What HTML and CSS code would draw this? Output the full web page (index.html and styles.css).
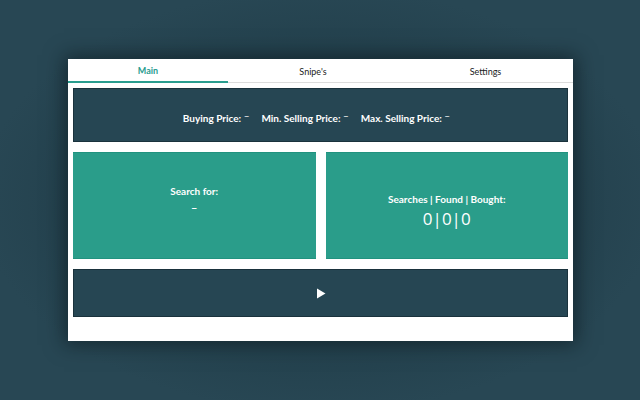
FILE: index.html
```html
<!DOCTYPE html>
<html>
<head>
<meta charset="utf-8">
<link rel="stylesheet" href="styles.css">
</head>
<body>
<div class="window">
  <div class="tabs">
    <div class="tab active">Main</div>
    <div class="tab">Snipe's</div>
    <div class="tab">Settings</div>
  </div>
  <div class="content">
    <div class="panel dark prices">
      <span class="price">Buying Price: <span class="dash">–</span></span>
      <span class="price">Min. Selling Price: <span class="dash">–</span></span>
      <span class="price">Max. Selling Price: <span class="dash">–</span></span>
    </div>
    <div class="row">
      <div class="panel teal search">
        <div class="label">Search for:</div>
        <div class="value-small">–</div>
      </div>
      <div class="panel teal stats">
        <div class="label">Searches | Found | Bought:</div>
        <div class="value">0|0|0</div>
      </div>
    </div>
    <div class="panel dark play">
      <svg width="10" height="11" viewBox="0 0 10 11"><path d="M1 0.5 L9.5 5.5 L1 10.5 Z" fill="#fff"/></svg>
    </div>
  </div>
</div>
</body>
</html>
```
FILE: styles.css
```css
html, body {
  margin: 0;
  padding: 0;
}
body {
  background: radial-gradient(ellipse at 50% 50%, #1c333d 0%, #223f4b 45%, #284754 75%);
  width: 640px;
  height: 400px;
  overflow: hidden;
  font-family: "Lato", "Open Sans", sans-serif;
  padding-top: 59px;
  box-sizing: border-box;
}
.window {
  margin-left: 68px;
  width: 505px;
  height: 282px;
  background: #fff;
  box-shadow: 0 0 18px 4px rgba(10, 20, 25, 0.55);
  display: flex;
  flex-direction: column;
}
.tabs {
  display: flex;
  height: 24px;
  border-bottom: 1px solid #dcdcdc;
  box-sizing: border-box;
}
.tab {
  flex: 1;
  display: flex;
  align-items: center;
  justify-content: center;
  font-size: 9px;
  color: #222;
  box-sizing: border-box;
  padding-top: 1px;
}
.tab.active {
  color: #2a9d8f;
  font-weight: 700;
  border-bottom: 2px solid #2a9d8f;
  margin-bottom: -1px;
  flex: 0 0 160px;
}
.tab:nth-child(2) { flex: 0 0 170px; }
.content {
  padding: 5px 5px 0 5px;
  display: flex;
  flex-direction: column;
  gap: 10px;
}
.panel {
  box-sizing: border-box;
  color: #fff;
  display: flex;
  align-items: center;
  justify-content: center;
}
.dark {
  background: #264653;
  border: 1px solid #1a323c;
}
.teal {
  background: #2a9d8a;
  border-top: 1px solid #21927f;
  border-bottom: 1px solid #21927f;
  flex-direction: column;
  flex: 1;
  height: 107px;
}
.search {
  padding-bottom: 12px;
}
.stats {
  padding-top: 12px;
}
.prices {
  height: 54px;
  gap: 12px;
  font-size: 10px;
  font-weight: 700;
  padding-top: 6px;
  padding-right: 8px;
}
.dash {
  position: relative;
  top: -3px;
  font-weight: 400;
}
.row {
  display: flex;
  gap: 10px;
}
.label {
  font-size: 10px;
  font-weight: 700;
}
.value-small {
  font-size: 11px;
  font-weight: 700;
  margin-top: 4px;
}
.value {
  font-family: "Open Sans", sans-serif;
  font-size: 17px;
  margin-top: 2px;
}
.play {
  height: 48px;
}
```
